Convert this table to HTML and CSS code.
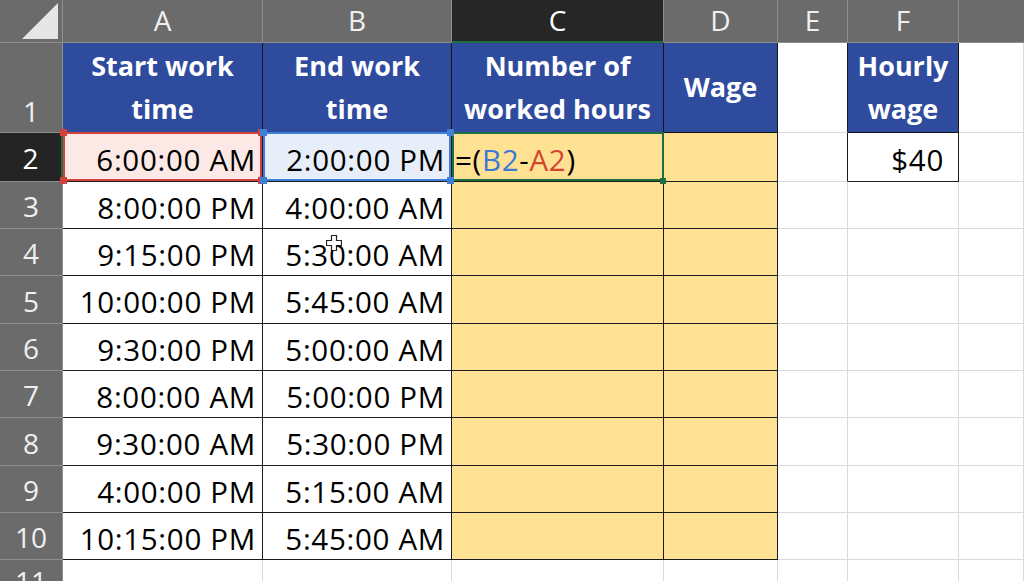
FILE: index.html
```html
<!DOCTYPE html>
<html>
<head>
<meta charset="utf-8">
<link rel="stylesheet" href="styles.css">
</head>
<body>
<div class="sheet">
  <div class="corner"><svg class="corner-tri" width="36" height="36" viewBox="0 0 36 36"><polygon points="36,0 36,36 0,36" fill="#e6e6e6"/></svg></div>
  <div class="ch">A</div>
  <div class="ch">B</div>
  <div class="ch ch-sel">C</div>
  <div class="ch">D</div>
  <div class="ch">E</div>
  <div class="ch">F</div>
  <div class="ch ch-last"></div>

  <div class="rh rh-tall">1</div>
  <div class="cell hd">Start work<br>time</div>
  <div class="cell hd">End work<br>time</div>
  <div class="cell hd">Number of<br>worked hours</div>
  <div class="cell hd">Wage</div>
  <div class="cell e-edge"></div>
  <div class="cell hd">Hourly<br>wage</div>
  <div class="cell"></div>

  <div class="rh rh-sel">2</div>
  <div class="cell t num ref-red"><span>6:00:00 AM</span><i class="h tl"></i><i class="h tr"></i><i class="h bl"></i><i class="h br"></i></div>
  <div class="cell t num ref-blue"><span>2:00:00 PM</span><i class="h tl"></i><i class="h tr"></i><i class="h bl"></i><i class="h br"></i></div>
  <div class="cell t y active"><span class="formula">=(<b class="fb">B2</b>-<b class="fr">A2</b>)</span><i class="h br"></i></div>
  <div class="cell t y"></div>
  <div class="cell e-edge"></div>
  <div class="cell t num fbox">$40</div>
  <div class="cell"></div>

  <div class="rh">3</div>
  <div class="cell t num">8:00:00 PM</div>
  <div class="cell t num">4:00:00 AM</div>
  <div class="cell t y"></div>
  <div class="cell t y"></div>
  <div class="cell"></div>
  <div class="cell"></div>
  <div class="cell"></div>

  <div class="rh">4</div>
  <div class="cell t num">9:15:00 PM</div>
  <div class="cell t num has-cursor">5:30:00 AM<svg class="cursor" width="16" height="16" viewBox="0 0 16 16"><path d="M5.5 0.5h5v5h5v5h-5v5h-5v-5h-5v-5h5z" fill="#fff" stroke="#222" stroke-width="1.2"/></svg></div>
  <div class="cell t y"></div>
  <div class="cell t y"></div>
  <div class="cell"></div>
  <div class="cell"></div>
  <div class="cell"></div>

  <div class="rh">5</div>
  <div class="cell t num">10:00:00 PM</div>
  <div class="cell t num">5:45:00 AM</div>
  <div class="cell t y"></div>
  <div class="cell t y"></div>
  <div class="cell"></div>
  <div class="cell"></div>
  <div class="cell"></div>

  <div class="rh">6</div>
  <div class="cell t num">9:30:00 PM</div>
  <div class="cell t num">5:00:00 AM</div>
  <div class="cell t y"></div>
  <div class="cell t y"></div>
  <div class="cell"></div>
  <div class="cell"></div>
  <div class="cell"></div>

  <div class="rh">7</div>
  <div class="cell t num">8:00:00 AM</div>
  <div class="cell t num">5:00:00 PM</div>
  <div class="cell t y"></div>
  <div class="cell t y"></div>
  <div class="cell"></div>
  <div class="cell"></div>
  <div class="cell"></div>

  <div class="rh">8</div>
  <div class="cell t num">9:30:00 AM</div>
  <div class="cell t num">5:30:00 PM</div>
  <div class="cell t y"></div>
  <div class="cell t y"></div>
  <div class="cell"></div>
  <div class="cell"></div>
  <div class="cell"></div>

  <div class="rh">9</div>
  <div class="cell t num">4:00:00 PM</div>
  <div class="cell t num">5:15:00 AM</div>
  <div class="cell t y"></div>
  <div class="cell t y"></div>
  <div class="cell"></div>
  <div class="cell"></div>
  <div class="cell"></div>

  <div class="rh">10</div>
  <div class="cell t num">10:15:00 PM</div>
  <div class="cell t num">5:45:00 AM</div>
  <div class="cell t y"></div>
  <div class="cell t y"></div>
  <div class="cell"></div>
  <div class="cell"></div>
  <div class="cell"></div>

  <div class="rh rh-cut">11</div>
  <div class="cell"></div>
  <div class="cell"></div>
  <div class="cell"></div>
  <div class="cell"></div>
  <div class="cell"></div>
  <div class="cell"></div>
  <div class="cell"></div>
</div>
</body>
</html>
```

FILE: styles.css
```css
html, body {
  margin: 0;
  padding: 0;
  background: #ffffff;
}

.sheet {
  width: 1024px;
  height: 581px;
  overflow: hidden;
  display: grid;
  grid-template-columns: 63px 200px 189px 212px 114px 70px 111px 1fr;
  grid-template-rows: 43px 90px 49px 47px 47px 48px 47px 47px 48px 47px 47px 47px;
  font-family: "Open Sans", "Liberation Sans", sans-serif;
}

.sheet > div {
  box-sizing: border-box;
  position: relative;
}

.corner {
  background: #6b6b6b;
  border-right: 1px solid #8e8e8e;
  border-bottom: 1px solid #8e8e8e;
}

.corner-tri {
  position: absolute;
  left: 22px;
  top: 3px;
}

.ch {
  background: #6b6b6b;
  color: #f0f0f0;
  border-right: 1px solid #8e8e8e;
  border-bottom: 1px solid #8e8e8e;
  display: flex;
  align-items: center;
  justify-content: center;
  font-size: 28px;
  padding-bottom: 2px;
}

.ch-sel {
  background: #262626;
  border-bottom: 2px solid #1e6e42;
  color: #ffffff;
}

.ch-last {
  border-right: none;
}

.rh {
  background: #6b6b6b;
  color: #f0f0f0;
  border-right: 1px solid #8e8e8e;
  border-bottom: 1px solid #8e8e8e;
  display: flex;
  align-items: center;
  justify-content: center;
  font-size: 28px;
  padding-top: 2px;
}

.rh-tall {
  align-items: flex-end;
  padding-bottom: 2px;
}

.rh-cut {
  align-items: flex-start;
  padding-top: 2px;
}

.rh-sel {
  background: #242424;
  color: #ffffff;
  border-right: 2px solid #1e6e42;
}

.cell {
  border-right: 1px solid #dadada;
  border-bottom: 1px solid #dadada;
}

.hd {
  background: #2f4b9e;
  color: #ffffff;
  font-weight: 700;
  font-size: 27px;
  line-height: 43px;
  text-align: center;
  display: flex;
  align-items: center;
  justify-content: center;
  border-right: 1px solid #151515;
  border-bottom: 1px solid #151515;
  padding-bottom: 2px;
}

.t {
  border-right: 1px solid #1c1c1c;
  border-bottom: 1px solid #1c1c1c;
}

.e-edge {
  border-right: 1px solid #1c1c1c;
}

.num {
  display: flex;
  align-items: center;
  justify-content: flex-end;
  padding-right: 6px;
  padding-top: 4px;
  font-size: 29.5px;
  letter-spacing: 0.7px;
  color: #000000;
}

.y {
  background: #ffe194;
}

.fbox {
  padding-right: 14px;
}

.ref-red {
  background: #fce9e6;
}

.ref-red::before {
  content: "";
  position: absolute;
  inset: -1px 0 0 0;
  border: 2px solid #d2423a;
}

.ref-blue {
  background: #e7eef9;
}

.ref-blue::before {
  content: "";
  position: absolute;
  inset: -1px 0 0 0;
  border: 2px solid #3f7fd8;
}

.num span {
  position: relative;
}

.h {
  position: absolute;
  width: 7px;
  height: 7px;
  z-index: 2;
}

.ref-red .h { background: #d2423a; }
.ref-blue .h { background: #3f7fd8; }
.active .h { background: #1e6e42; width: 6px; height: 6px; }

.tl { left: -3px; top: -4px; }
.tr { right: -3px; top: -4px; }
.bl { left: -3px; bottom: -3px; }
.br { right: -3px; bottom: -3px; }

.active {
  display: flex;
  align-items: center;
  padding-left: 3px;
  padding-top: 4px;
}

.active::before {
  content: "";
  position: absolute;
  inset: -1px -1px 0 0;
  border: 2px solid #1e6e42;
}

.formula {
  font-size: 29.5px;
  letter-spacing: 0.7px;
  color: #000000;
  position: relative;
}

.formula b {
  font-weight: 400;
}

.fb { color: #3d7ad6; }
.fr { color: #d4452f; }

.cursor {
  position: absolute;
  left: 63px;
  top: 6px;
}
```
